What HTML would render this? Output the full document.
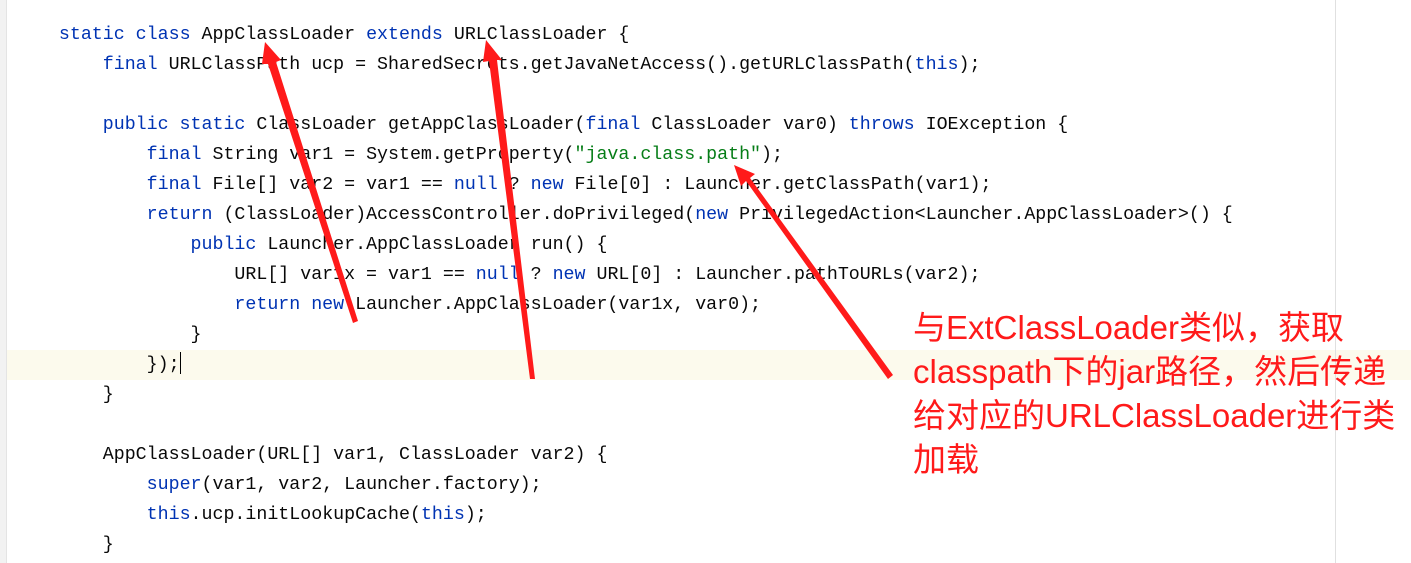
<!DOCTYPE html>
<html><head><meta charset="utf-8"><style>
body{margin:0;width:1411px;height:563px;background:#fff;position:relative;overflow:hidden}
.strip{position:absolute;left:0;top:0;width:6px;height:563px;background:#f2f2f2;border-right:1px solid #e4e4e4}
.hl{position:absolute;left:7px;top:350px;width:1404px;height:30px;background:#fcfaed}
.vl{position:absolute;left:1335px;top:0;width:1px;height:563px;background:#e0e0e0}
pre{position:absolute;left:15px;top:20px;margin:0;font-family:"Liberation Mono",monospace;font-size:18.3px;line-height:30px;color:#080808}
.k{color:#0033b3}.s{color:#067d17}
.cur{display:inline-block;width:1.5px;height:22px;background:#000;vertical-align:-5px}
.note{position:absolute;left:913px;top:306px;font-family:"Liberation Sans","Noto Sans CJK SC",sans-serif;font-size:33px;line-height:44px;color:#ff1a1a;white-space:nowrap}
svg{position:absolute;left:0;top:0}
</style></head><body>
<div class="strip"></div><div class="hl"></div><div class="vl"></div>
<pre>    <span class="k">static class</span> AppClassLoader <span class="k">extends</span> URLClassLoader {
        <span class="k">final</span> URLClassPath ucp = SharedSecrets.getJavaNetAccess().getURLClassPath(<span class="k">this</span>);

        <span class="k">public static</span> ClassLoader getAppClassLoader(<span class="k">final</span> ClassLoader var0) <span class="k">throws</span> IOException {
            <span class="k">final</span> String var1 = System.getProperty(<span class="s">"java.class.path"</span>);
            <span class="k">final</span> File[] var2 = var1 == <span class="k">null</span> ? <span class="k">new</span> File[<span>0</span>] : Launcher.getClassPath(var1);
            <span class="k">return</span> (ClassLoader)AccessController.doPrivileged(<span class="k">new</span> PrivilegedAction&lt;Launcher.AppClassLoader&gt;() {
                <span class="k">public</span> Launcher.AppClassLoader run() {
                    URL[] var1x = var1 == <span class="k">null</span> ? <span class="k">new</span> URL[0] : Launcher.pathToURLs(var2);
                    <span class="k">return new</span> Launcher.AppClassLoader(var1x, var0);
                }
            });<span class="cur"></span>
        }

        AppClassLoader(URL[] var1, ClassLoader var2) {
            <span class="k">super</span>(var1, var2, Launcher.factory);
            <span class="k">this</span>.ucp.initLookupCache(<span class="k">this</span>);
        }</pre>
<svg width="1411" height="563">
<g fill="#ff1a1a" stroke="none">
<polygon points="353,323 358,321 276,62 281,60 265,42 262,64 268,64"/>
<polygon points="530,379 535,379 497,60 502,60 486,40 483,62 489,61"/>
<polygon points="888,379 893,375 750,178 755,174 734,165 741,186 746,181"/>
</g>
</svg>
<div class="note">与ExtClassLoader类似，获取<br>classpath下的jar路径，然后传递<br>给对应的URLClassLoader进行类<br>加载</div>
</body></html>
